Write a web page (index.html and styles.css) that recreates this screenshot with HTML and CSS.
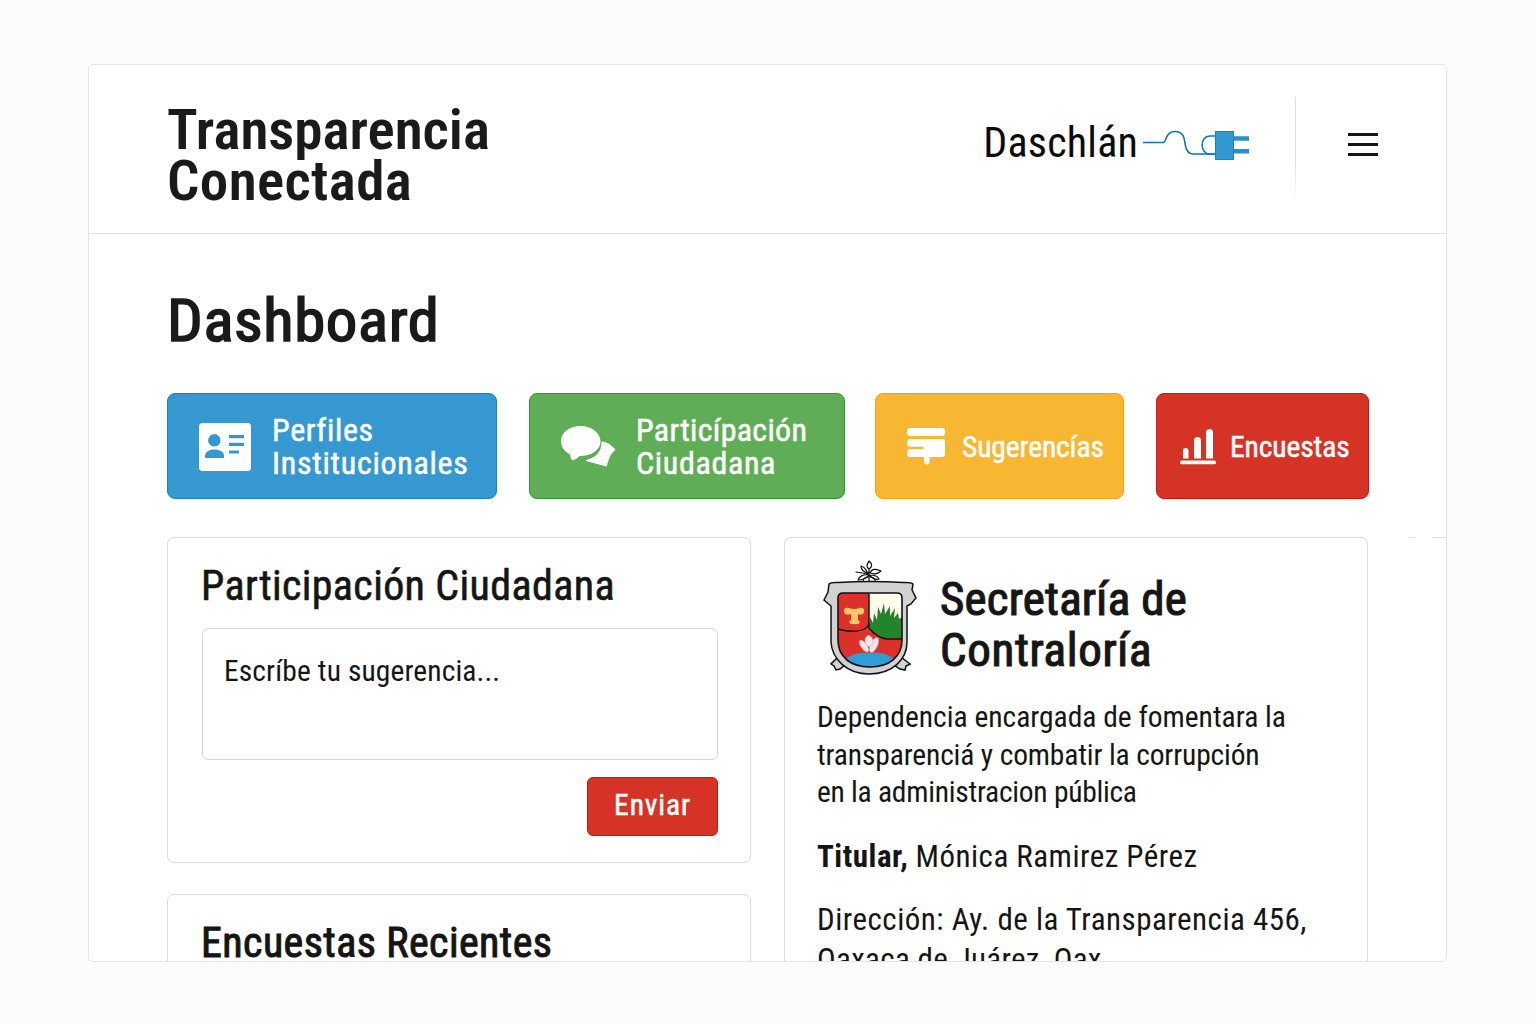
FILE: index.html
```html
<!DOCTYPE html>
<html lang="es">
<head>
<meta charset="utf-8">
<title>Transparencia Conectada</title>
<link rel="stylesheet" href="styles.css">
</head>
<body>
<div class="frame">
  <header class="header">
    <h1 class="brand"><span class="t-transp">Transparencia</span><br><span class="t-conect">Conectada</span></h1>
    <div class="user">
      <span class="user-name">Daschlán</span>
      <svg class="plug" width="108" height="34" viewBox="0 0 108 34" fill="none">
        <path d="M0 15.500H20.500C23.500 15.500 22 4.500 32 4.500C42.500 4.500 41.500 15 42.500 19C43.500 23.500 46 27 50 27H73" stroke="#1470bd" stroke-width="1.600"/>
        <path d="M73 9H67C56.500 9 56.500 27 67 27H73" stroke="#1878c2" stroke-width="1.600"/>
        <rect x="72.500" y="4.500" width="18" height="28" fill="#3498d0" stroke="#1b82c6"/>
        <path d="M91 11.500H106M91 24.200H106" stroke="#2a8fce" stroke-width="4.600"/>
      </svg>
    </div>
    <div class="divider"></div>
    <button class="menu" aria-label="Menú"><i></i><i></i><i></i></button>
  </header>
  <main class="main">
    <h2 class="title">Dashboard</h2>
    <nav class="tiles">
      <a class="tile blue">
        <svg width="54" height="50" viewBox="0 0 54 50"><rect x="1" y="1" width="52" height="48" rx="3.500" fill="#fff"/><g fill="#3498d0"><circle cx="16.300" cy="18.300" r="6.200"/><path d="M7 36V34C7 30 11 27.500 16.500 27.500S26 30 26 34V36Z"/><path d="M31 13H46V16.200H31ZM31 20.700H46V24H31ZM31 28.500H41V31.500H31Z"/></g></svg>
        <span class="tile-text"><span class="t-perf">Perfiles</span><br><span class="t-inst">Institucionales</span></span>
      </a>
      <a class="tile green">
        <svg width="56" height="43" viewBox="0 0 56 43" fill="#fff"><path d="M42 17C46 17 51 20 55 24.500C50 29 48 34 46.500 41L26 35.500C37 33 42 26 42 17Z" stroke="#fff" stroke-linejoin="round"/><path d="M20.500 1C9.500 1 1 7.500 1 16C1 22 4.500 26.500 10 29.500C10.500 32 11 34 12 35.500C15.500 35 17.500 33 19.500 31C31.500 31 40.500 25 40.500 16.500C40.500 7.500 31.500 1 20.500 1Z"/></svg>
        <span class="tile-text"><span class="t-part">Particípación</span><br><span class="t-ciud">Ciudadana</span></span>
      </a>
      <a class="tile yellow">
        <svg width="38" height="37" viewBox="0 0 38 37" fill="#fff"><rect width="38" height="8" rx="3"/><path d="M3 11H36Q38 11 38 13V26C38 28 37 29 35 29H22.500V33.500C22.500 37.500 17 37.500 17 33.500V29H3C-1 29 -1 21 3 21H16.500V18.800H3C-1 18.800 -1 11 3 11Z"/></svg>
        <span class="tile-text t-sug">Sugerencías</span>
      </a>
      <a class="tile red">
        <svg width="36" height="37" viewBox="0 0 36 37" fill="#fff"><path d="M3 30.500V22Q3 20 5.500 20T8.500 22V30.500ZM14 30.500V12.500Q14 9 17.500 9T21 12.500V30.500ZM26 30.500V4.500Q26 1 29.500 1T33 4.500V30.500Z"/><rect x="0" y="32.500" width="36" height="3.800" rx="1.900"/></svg>
        <span class="tile-text t-enc">Encuestas</span>
      </a>
    </nav>
    <div class="columns">
      <div class="left">
        <section class="card form-card">
          <h3 class="card-title t-pc">Participación Ciudadana</h3>
          <div class="textarea"><span class="t-esc">Escríbe tu sugerencia...</span></div>
          <button class="send"><span class="t-env">Enviar</span></button>
        </section>
        <section class="card">
          <h3 class="card-title strong t-er">Encuestas Recientes</h3>
        </section>
      </div>
      <section class="card org">
        <div class="org-head">
          <svg width="96" height="118" viewBox="0 0 96 118">
            <g fill="none" stroke="#111" stroke-width="1.200" stroke-linecap="round" stroke-linejoin="round"><path d="M46 22V9M46 9C42 6 45 4 46 1C50 4 49 7 46 9M45 13C42 10 43 7 38 6C38 10 41 12 45 13M47 13C49 8 54 9 58 11C54 15 50 14 47 13M33 12L45 14M46 15C41 14 36 16 35 20C39 20 43 19 46 15C50 19 53 20 56 19C55 16 51 15 46 15"/><path d="M40 22C40 18 42 17 45 17M52 22C53 19 50 17 47 17"/></g>
            <g fill="#d2d2d2" stroke="#111" stroke-width="1.500"><path d="M15 97L8 104L11 106L13 110L17 109L22 105ZM78 97L87 104L83 106L82 110L77 109L71 105Z"/>
            <path d="M6 24Q8 22 15 22.500Q47 20.500 80 22.500Q88 22 90 24L89 30L93 38L88 44L84 46V82C84 99 70 114 46 114C24 114 9 99 8 82V46L1 40L5 32Z"/></g>
            <path d="M20 33H74Q79 33 79 38V80C79 97 66 107 47 107C28 107 15 97 15 80V38Q15 33 20 33Z" fill="#dc3028"/>
            <path d="M46 33H74Q79 33 79 38V64H46Z" fill="#fffde9"/>
            <path d="M46 68L47 57L50 63L51 53L54 60L55 47L58 54L61 43L62 54L67 46L67 56L72 48L71 58L75 53L76 59L79 57V78H60L47 70Z" fill="#24842d"/>
            <path d="M22 100C27 94 38 92 47 93C56 91 67 95 71 99C60 110 34 110 22 100Z" fill="#2f9ed8"/>
            <path d="M21 52Q20 47 26 48Q31 50 36 48Q42 47 41 52Q40 56 35 54V60L37 62Q36 65 32 64Q27 65 26 62L28 60V54Q22 56 21 52Z" fill="#f9c66b"/>
            <g fill="#f3e6ea" stroke="#d5a7ae" stroke-width=".5"><ellipse cx="41" cy="86" rx="3" ry="7" transform="rotate(-35 41 86)"/><ellipse cx="51" cy="85" rx="3.500" ry="8" transform="rotate(25 51 85)"/><ellipse cx="46" cy="81" rx="4" ry="5.500" transform="rotate(-10 46 81)"/></g>
            <path d="M15 69Q33 74 43 68Q46 66 46 62M46 34V68Q54 78 64 79H79" fill="none" stroke="#111" stroke-width="1.400"/>
            <path d="M20 33H74Q79 33 79 38V80C79 97 66 107 47 107C28 107 15 97 15 80V38Q15 33 20 33Z" fill="none" stroke="#111" stroke-width="1.600"/>
          </svg>
          <h3 class="org-title"><span class="t-sec">Secretaría de</span><br><span class="t-con">Contraloría</span></h3>
        </div>
        <p class="desc"><span class="t-d1">Dependencia encargada de fomentara la</span><br><span class="t-d2">transparenciá y combatir la corrupción</span><br><span class="t-d3">en la administracion pública</span></p>
        <p class="holder"><b class="t-tit">Titular,</b> <span class="t-mon">Mónica Ramirez Pérez</span></p>
        <p class="address"><span class="t-dir">Dirección: Ay. de la Transparencia 456,</span><br><span class="t-oax">Oaxaca de Juárez, Oax.</span></p>
      </section>
    </div>
  </main>
</div>
</body>
</html>
```
FILE: styles.css
```css
* { box-sizing: border-box; }
body { margin: 0; padding: 64px 89px 0 88px; height: 1024px; overflow: hidden; background: #fcfcfc; color: #151515; font-family: Roboto, "Liberation Sans", sans-serif; font-stretch: 75%; }
h1, h2, h3, p { margin: 0; font-weight: 400; }
button { font: inherit; border: 0; background: none; padding: 0; }
svg { display: block; flex: none; }
.frame { height: 898px; border: 1px solid #e4e4e4; border-radius: 5px; background: #fff; overflow: hidden; }
.header { height: 169px; border-bottom: 1px solid #e0e0e0; display: flex; align-items: flex-start; padding: 32px 68px 0 79px; }
.brand { font-size: 55px; line-height: 51px; font-weight: 600; flex: 1; padding-top: 8px; transform: scaleX(1.037); transform-origin: left; margin-left: -1px; color: #1a1a1a; }
.user { display: flex; align-items: flex-start; gap: 5px; padding-top: 21px; }
.user-name { font-size: 42px; line-height: 50px; color: #0b0b0b; letter-spacing: 0.2px; }
.plug { margin-top: 9px; }
.divider { width: 1px; height: 104px; margin-left: 44px; background: linear-gradient(#ddd 60%, #fff); }
.menu { width: 30px; margin: 36px 0 0 52px; display: flex; flex-direction: column; gap: 7px; }
.menu i { height: 3px; background: #151515; }
/* short rule fragments at the right edge of the content area */
.main { padding: 52px 77px 0 78px; background: linear-gradient(#e6e6e6, #e6e6e6) 1319px 303px / 8px 1px no-repeat, linear-gradient(#dedede, #dedede) 1343px 303px / 14px 1px no-repeat; }
.title { font-size: 58.5px; line-height: 70px; -webkit-text-stroke: 1.6px #1a1a1a; color: #1a1a1a; letter-spacing: 0.6px; transform: scaleX(1.072); transform-origin: left; }
.tiles { display: flex; gap: 32px; margin-top: 37px; }
.tile { height: 106px; border: 1px solid; border-radius: 8px; display: flex; align-items: center; color: #fff; padding-top: 1px; }
.tile-text { font-size: 32px; line-height: 33px; -webkit-text-stroke: 0.5px #fff; white-space: nowrap; padding-top: 1px; }
.blue { width: 330px; padding-left: 30px; gap: 20px; background: #3598d1; border-color: #1b82c4; }
.green { width: 316px; padding-left: 30px; gap: 20px; background: #5fae57; border-color: #2c9a2a; }
.yellow { width: 249px; padding-left: 31px; gap: 17px; margin-left: -2px; background: #f8b733; border-color: #f3a30f; }
.red { width: 213px; padding-left: 23px; gap: 14px; background: #d63327; border-color: #cc1512; }
.yellow .tile-text, .red .tile-text { font-size: 29.5px; }
.columns { display: flex; justify-content: space-between; align-items: flex-start; margin-top: 38px; padding-right: 1px; }
.card { width: 584px; border: 1px solid #dadada; border-radius: 7px; padding: 0 32px 0 34px; white-space: nowrap; }
.form-card { height: 326px; margin-bottom: 31px; }
.card-title { font-size: 42px; line-height: 50px; padding-top: 23px; margin-left: -1px; -webkit-text-stroke: 0.6px #151515; }
.card-title.strong { -webkit-text-stroke-width: 1px; }
.textarea { height: 132px; margin-top: 17px; border: 1px solid #d6d6d6; border-radius: 6px; padding: 24px 21px; font-size: 29.5px; line-height: 36px; }
.send { display: block; margin: 17px 0 0 auto; width: 131px; height: 59px; border-radius: 6px; border: 1px solid #cc1512; background: #d63327; color: #fff; font-size: 29.5px; line-height: 54px; padding-bottom: 3px; -webkit-text-stroke: 0.5px #fff; }
.org { height: 500px; padding: 0 20px 0 32px; }
.org-head { display: flex; gap: 21px; padding: 22px 0 0 6px; height: 147px; }
.org-title { font-size: 47px; line-height: 51px; padding-top: 13px; -webkit-text-stroke: 1.2px #1a1a1a; }
.desc { font-size: 29.5px; line-height: 37.5px; padding-top: 14px; }
.holder { font-size: 31px; line-height: 38px; margin-top: 26px; }
.address { font-size: 31px; line-height: 40px; margin-top: 24px; }

/* tracking per line of text */
.t-conect { letter-spacing: 0.35px; }
.t-perf { letter-spacing: 0.6px; }
.t-inst { letter-spacing: 0.72px; }
.t-part { letter-spacing: 0.3px; }
.t-ciud { letter-spacing: 0.65px; }
.t-sug, .t-enc { letter-spacing: -0.1px; }
.t-pc { letter-spacing: 0.38px; }
.t-esc { letter-spacing: 0.12px; }
.t-env { letter-spacing: 0.9px; }
.t-er { letter-spacing: 0.42px; }
.t-sec { letter-spacing: 0.2px; }
.t-con { letter-spacing: 0.65px; }
.t-d2 { letter-spacing: -0.14px; }
.t-d3 { letter-spacing: -0.26px; }
.t-tit { letter-spacing: 0.55px; }
.t-mon { letter-spacing: 0.48px; }
.t-dir { letter-spacing: 0.5px; }
.t-oax { letter-spacing: 0.34px; }
```
